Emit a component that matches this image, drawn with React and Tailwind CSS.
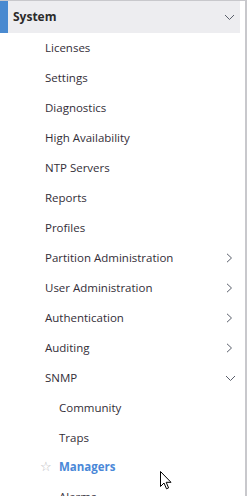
import React from "react";

const font = { fontFamily: '"Open Sans", "Noto Sans", sans-serif' };

const ChevronRight = () => (
  <svg width="7" height="10" viewBox="0 0 7 10" className="text-[#5a5f6b]">
    <path d="M1 0.8 L5.5 5 L1 9.2" fill="none" stroke="currentColor" strokeWidth="1" />
  </svg>
);

const ChevronDown = () => (
  <svg width="11" height="7" viewBox="0 0 11 7" className="text-[#5a5f6b]">
    <path d="M1 1 L5.5 5.5 L10 1" fill="none" stroke="currentColor" strokeWidth="1" />
  </svg>
);

const items = [
  { label: "Licenses" },
  { label: "Settings" },
  { label: "Diagnostics" },
  { label: "High Availability" },
  { label: "NTP Servers" },
  { label: "Reports" },
  { label: "Profiles" },
  { label: "Partition Administration", icon: "right" },
  { label: "User Administration", icon: "right" },
  { label: "Authentication", icon: "right" },
  { label: "Auditing", icon: "right" },
  { label: "SNMP", icon: "down" },
];

const snmpChildren = ["Community", "Traps", "Managers", "Alarms"];

export default function App() {
  return (
    <div className="relative w-[247px] h-[496px] overflow-hidden bg-white border-t border-[#c8c8cc]" style={font}>
      <div className="flex h-full">
        <div className="flex-1 flex flex-col">
          <div className="shrink-0 flex items-center h-[32px] w-[240px] bg-[#ededf0] border-l-[8px] border-[#4a8ad0]">
            <span className="ml-[5px] text-[12px] font-bold text-[#2b2b2b]">System</span>
            <span className="ml-auto mr-[5px] flex"><ChevronDown /></span>
          </div>
          <ul className="shrink-0 flex flex-col">
            {items.map((it) => (
              <li key={it.label} className="shrink-0 flex items-center h-[30px] pl-[45px] pr-[6px] text-[11.5px] text-[#332e38]">
                <span>{it.label}</span>
                {it.icon === "right" && <span className="ml-auto flex mr-[1px]"><ChevronRight /></span>}
                {it.icon === "down" && <span className="ml-auto flex mr-[-2px]"><ChevronDown /></span>}
              </li>
            ))}
            {snmpChildren.map((c) => (
              <li key={c} className={`shrink-0 flex items-center h-[29.5px] text-[11.5px] ${c === "Managers" ? "pl-[40px]" : "pl-[59px]"}`}>
                {c === "Managers" ? (
                  <>
                    <span className="w-[19px] text-[13px] text-[#b8b8bc] leading-none">☆</span>
                    <span className="font-bold text-[#4a88d8]">{c}</span>
                  </>
                ) : (
                  <span className="text-[#332e38]">{c}</span>
                )}
              </li>
            ))}
          </ul>
        </div>
        <div className="w-[2px] bg-[#c8c8cc] ml-[5px]" />
      </div>
      <svg className="absolute left-[160px] top-[470px]" width="12" height="19" viewBox="0 0 12 19">
        <path d="M0.5 0.5 L0.5 15.5 L4 12 L6.5 17.8 L8.6 16.9 L6.2 11.3 L11 11.3 Z" fill="white" stroke="black" strokeWidth="1" />
      </svg>
    </div>
  );
}
